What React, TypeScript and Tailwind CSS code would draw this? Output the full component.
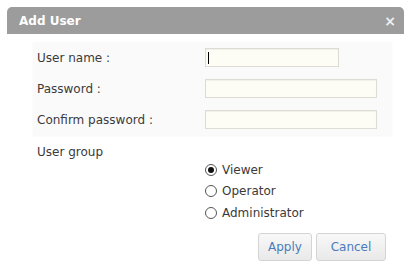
import { useState } from 'react'

const FONT = { fontFamily: '"DejaVu Sans", Verdana, sans-serif' }

const GROUPS = ['Viewer', 'Operator', 'Administrator']

function Row({ label, inputWidth, caret }: { label: string; inputWidth: string; caret?: boolean }) {
  return (
    <div className="flex h-[31px] items-center bg-[#fafafa] pl-[4px] shadow-[0_1px_2px_rgba(0,0,0,0.04)]">
      <span className="w-[168px] text-[12px] text-[#3a3a3a]">{label}</span>
      <div
        className={`relative h-[19px] ${inputWidth} border border-[#dcdcd4] bg-[#fdfdf6] shadow-[inset_0_1px_1px_rgba(0,0,0,0.05)]`}
      >
        {caret && <span className="absolute left-[2px] top-[3px] h-[12px] w-px bg-black" />}
      </div>
    </div>
  )
}

export default function App() {
  const [group, setGroup] = useState('Viewer')

  return (
    <div className="h-[262px] w-[404px] overflow-hidden bg-white" style={FONT}>
      <div className="ml-[7px] mt-[7px] w-[397px]">
        {/* Title bar */}
        <div className="flex h-[27px] items-center justify-between rounded-t-[5px] bg-[#9c9c9c] pl-[12px] pr-[8px]">
          <span className="text-[12px] font-bold text-white">Add User</span>
          <span className="text-[14px] font-bold leading-none text-[#eeeeee]">×</span>
        </div>

        {/* Body */}
        <div className="pl-[26px] pr-[12px] pt-[8px]">
          <Row label="User name :" inputWidth="w-[134px]" caret />
          <Row label="Password :" inputWidth="w-[172px]" />
          <Row label="Confirm password :" inputWidth="w-[172px]" />

          <div className="mt-[10px] pl-[4px] text-[12px] leading-[14px] text-[#3a3a3a]">User group</div>

          <div className="ml-[172px] flex flex-col">
            {GROUPS.map((g) => {
              const selected = g === group
              return (
                <label
                  key={g}
                  onClick={() => setGroup(g)}
                  className="flex h-[21.5px] cursor-pointer items-center gap-[5px] text-[12px] text-[#3a3a3a]"
                >
                  <span className="flex h-[12px] w-[12px] items-center justify-center rounded-full border border-[#555] bg-white">
                    {selected && <span className="h-[6px] w-[6px] rounded-full bg-[#111]" />}
                  </span>
                  {g}
                </label>
              )
            })}
          </div>

          <div className="mt-[9px] flex justify-end gap-[4px] pr-[6px]">
            <button
              type="button"
              className="h-[28px] w-[54px] rounded-[3px] border border-[#d4d4d4] bg-gradient-to-b from-[#f8f8f8] to-[#e9e9e9] text-[12px] text-[#4a7cbd]"
            >
              Apply
            </button>
            <button
              type="button"
              className="h-[28px] w-[70px] rounded-[3px] border border-[#d4d4d4] bg-gradient-to-b from-[#f8f8f8] to-[#e9e9e9] text-[12px] text-[#4a7cbd]"
            >
              Cancel
            </button>
          </div>
        </div>
      </div>
    </div>
  )
}
